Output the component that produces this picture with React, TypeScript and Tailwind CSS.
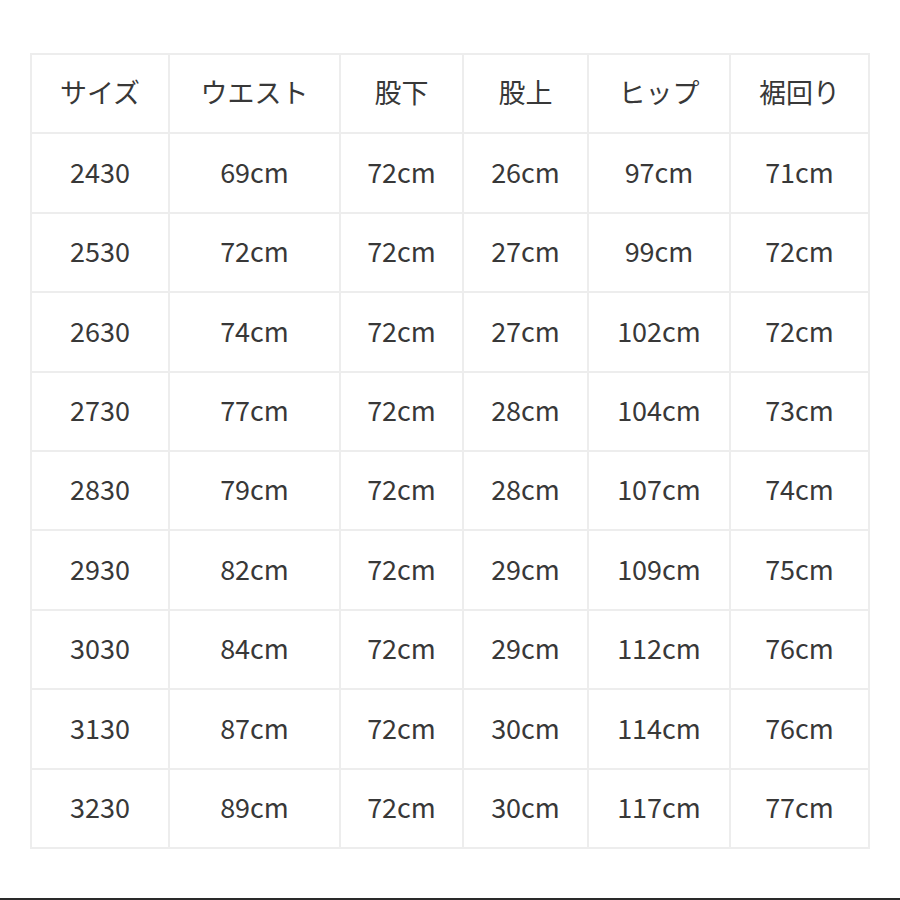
import React from "react";

const headers = ["サイズ", "ウエスト", "股下", "股上", "ヒップ", "裾回り"];
const rows: string[][] = [
  ["2430", "69cm", "72cm", "26cm", "97cm", "71cm"],
  ["2530", "72cm", "72cm", "27cm", "99cm", "72cm"],
  ["2630", "74cm", "72cm", "27cm", "102cm", "72cm"],
  ["2730", "77cm", "72cm", "28cm", "104cm", "73cm"],
  ["2830", "79cm", "72cm", "28cm", "107cm", "74cm"],
  ["2930", "82cm", "72cm", "29cm", "109cm", "75cm"],
  ["3030", "84cm", "72cm", "29cm", "112cm", "76cm"],
  ["3130", "87cm", "72cm", "30cm", "114cm", "76cm"],
  ["3230", "89cm", "72cm", "30cm", "117cm", "77cm"],
];

export default function App() {
  const all = [headers, ...rows];
  return (
    <div
      className="w-[900px] h-[900px] bg-white relative overflow-hidden flex flex-col"
      style={{ fontFamily: '"Noto Sans CJK JP", "Noto Sans", sans-serif' }}
    >
      <div className="pt-[53px] pl-[30px] flex-1">
        <div className="w-[840px] grid grid-cols-[136px_169px_121px_123px_140px_137px] gap-[2px] p-[2px] bg-[#ededed]">
          {all.map((r, i) =>
            r.map((c, j) => (
              <div
                key={`${i}-${j}`}
                className="bg-white h-[77.4px] pb-[2px] flex items-center justify-center text-[27px] text-[#383838]"
              >
                {c}
              </div>
            ))
          )}
        </div>
      </div>
      <div className="h-[2px] w-full bg-[#2a2a2a]" />
    </div>
  );
}
